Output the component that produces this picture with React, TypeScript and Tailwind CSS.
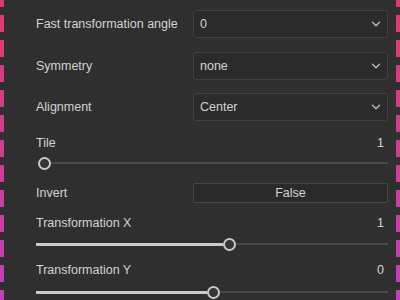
import React from "react";
import { ChevronDown } from "lucide-react";

const stripe =
  "w-[4px] shrink-0 bg-[repeating-linear-gradient(to_bottom,transparent_0_7px,#2f2f2f_7px_15px,transparent_15px_25px),linear-gradient(to_bottom,#e03a6c,#c23fbc)]";

function Select({ label, value }: { label: string; value: string }) {
  return (
    <div className="flex items-center h-[28px]">
      <div className="w-[157px] shrink-0">{label}</div>
      <div className="flex-1 h-full flex items-center justify-between rounded-[3px] border border-[#424242] bg-[#2b2b2b] pl-[6px] pr-[4px]">
        <span>{value}</span>
        <ChevronDown size={14} strokeWidth={2.2} className="text-[#bdbdbd]" />
      </div>
    </div>
  );
}

function LabelRow({ label, value }: { label: string; value: string }) {
  return (
    <div className="flex items-center justify-between h-[16px] pr-[4px]">
      <span>{label}</span>
      <span>{value}</span>
    </div>
  );
}

function Thumb() {
  return (
    <div className="w-[13px] h-[13px] shrink-0 rounded-full border-[2px] border-[#c9c9c9] bg-[#353535]" />
  );
}

export default function App() {
  return (
    <div className="w-[400px] h-[300px] bg-[#2f2f2f] flex overflow-hidden font-['Liberation_Sans',Arial,sans-serif] text-[12.5px] text-[#d3d3d3]">
      <div className={stripe} />
      <div className="flex-1 flex flex-col pl-[32px] pr-[8px] pt-[10px]">
        <Select label="Fast transformation angle" value="0" />
        <div className="mt-[14px]">
          <Select label="Symmetry" value="none" />
        </div>
        <div className="mt-[13px]">
          <Select label="Alignment" value="Center" />
        </div>

        <div className="mt-[14px]">
          <LabelRow label="Tile" value="1" />
        </div>
        <div className="mt-[5px] h-[14px] flex items-center">
          <div className="w-[2px] shrink-0" />
          <Thumb />
          <div className="flex-1 h-[2px] bg-[#4a4a4a]" />
        </div>

        <div className="mt-[13px] flex items-center h-[20px]">
          <div className="w-[157px] shrink-0">Invert</div>
          <div className="flex-1 h-full flex items-center justify-center rounded-[2px] border border-[#474747] bg-[#2a2a2a]">
            False
          </div>
        </div>

        <div className="mt-[12px]">
          <LabelRow label="Transformation X" value="1" />
        </div>
        <div className="mt-[6px] h-[14px] flex items-center">
          <div className="w-[187px] shrink-0 h-[3px] bg-[#cbcbcb]" />
          <Thumb />
          <div className="flex-1 h-[2px] bg-[#4a4a4a]" />
        </div>

        <div className="mt-[11px]">
          <LabelRow label="Transformation Y" value="0" />
        </div>
        <div className="mt-[7px] h-[14px] flex items-center">
          <div className="w-[171px] shrink-0 h-[3px] bg-[#cbcbcb]" />
          <Thumb />
          <div className="flex-1 h-[2px] bg-[#4a4a4a]" />
        </div>
      </div>
      <div className={stripe} />
    </div>
  );
}
